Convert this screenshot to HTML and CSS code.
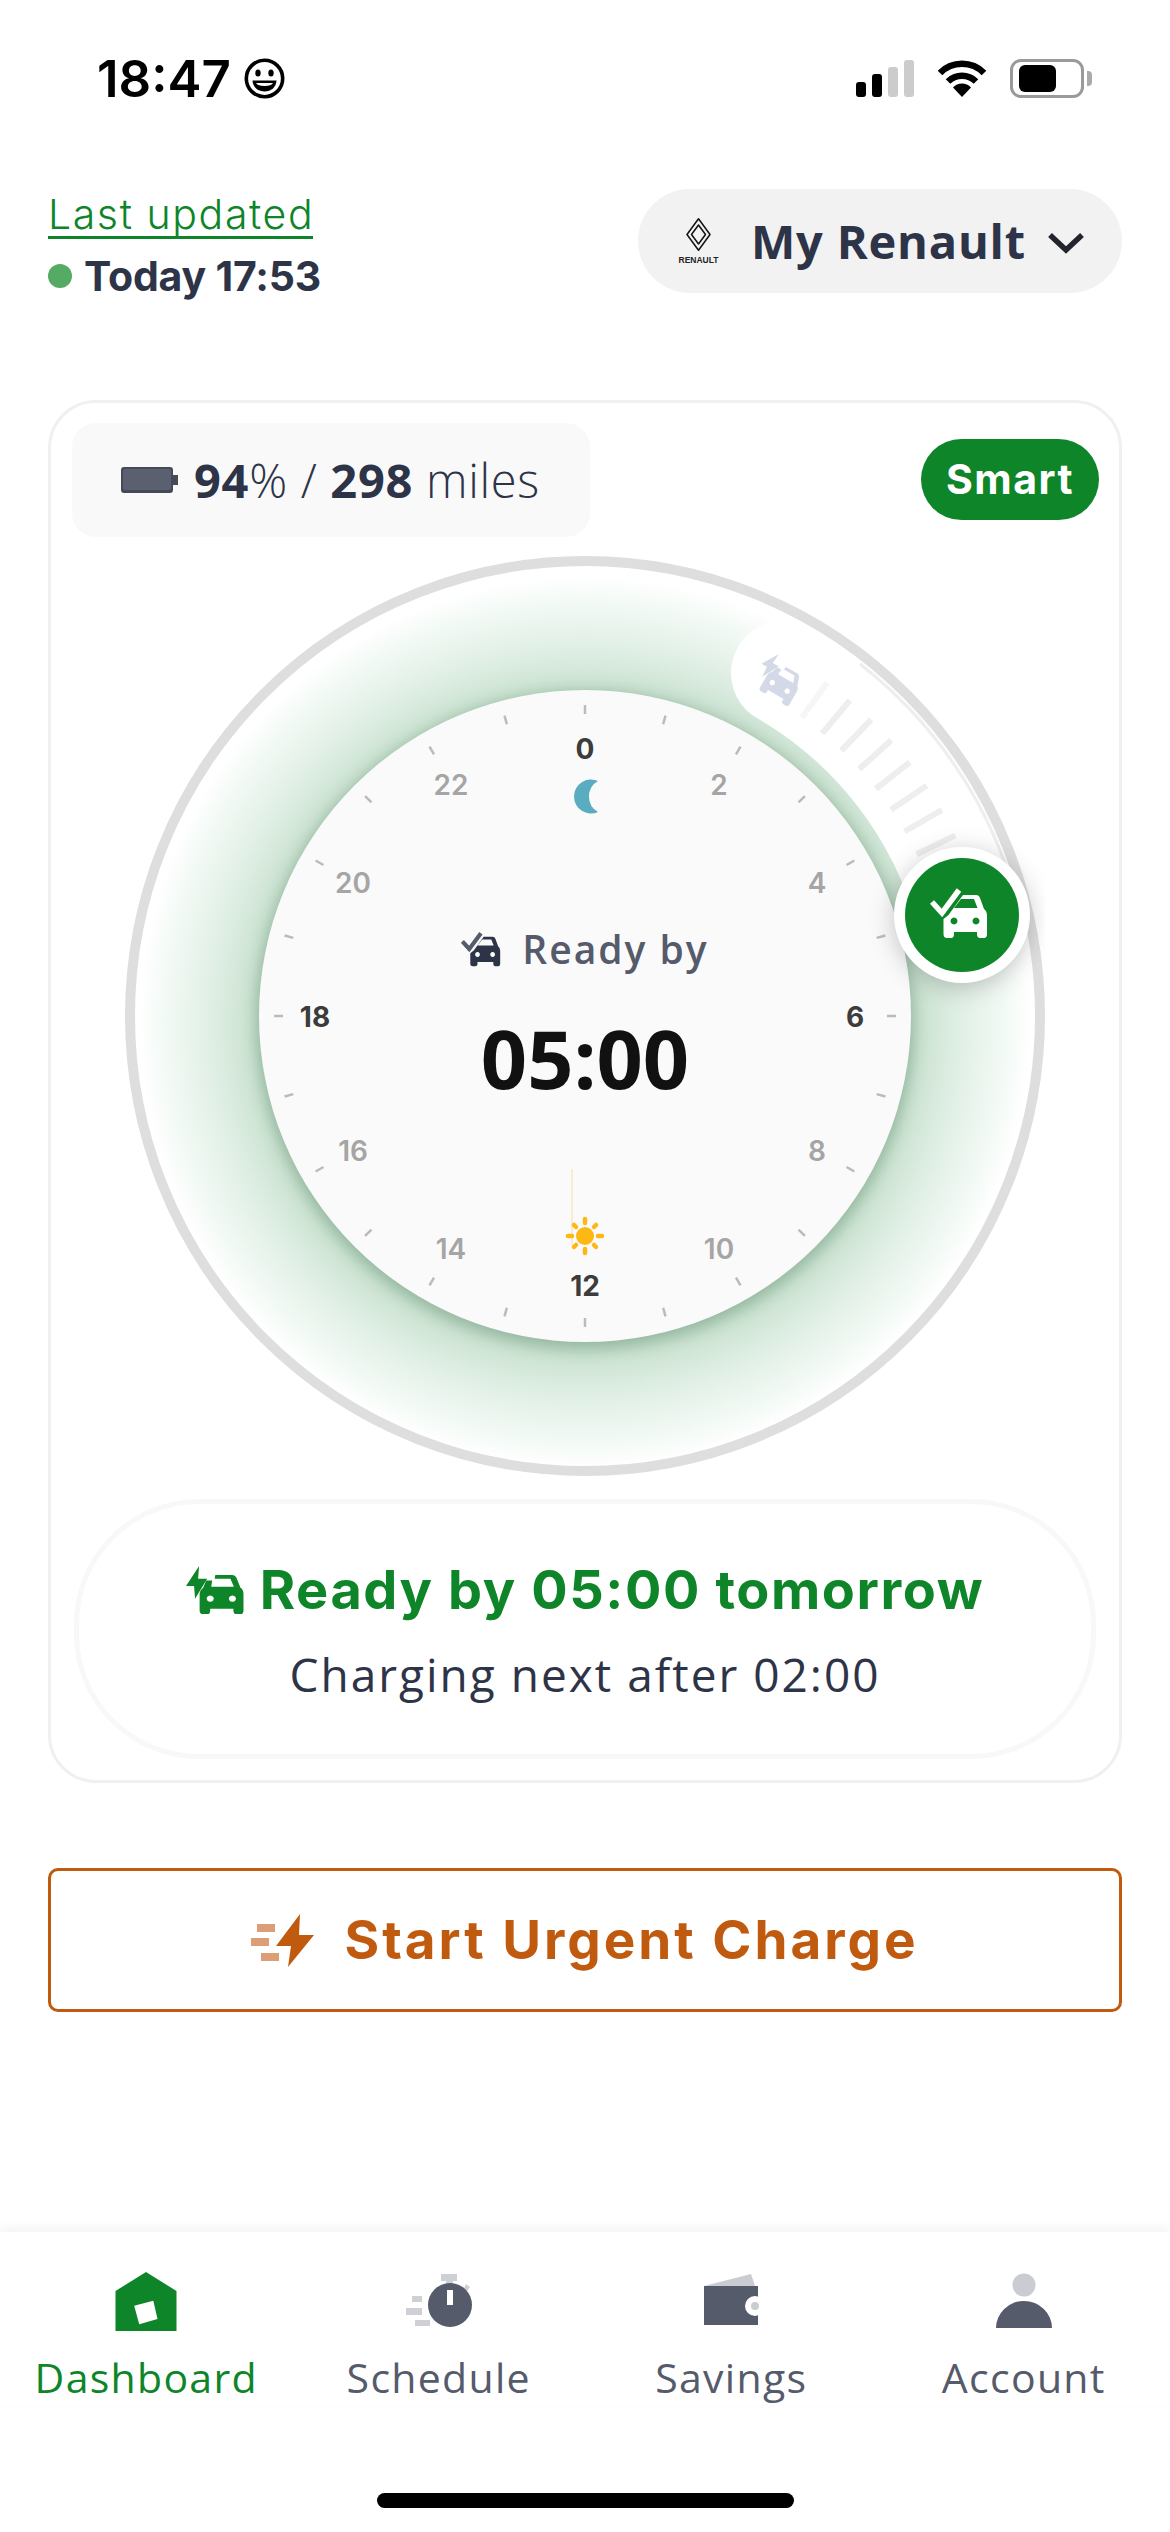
FILE: index.html
```html
<!DOCTYPE html>
<html lang="en">
<head>
    <meta charset="UTF-8">
    <title>Dashboard</title>

    <link rel="stylesheet" href="styles.css">
</head>

<body>
    <svg class="icon-defs" width="0" height="0">
        <symbol id="car-body" viewBox="0 0 64 52">
            <path fill-rule="evenodd" d="M33 8H46Q49 8 50 11L54 22Q57 24 57 29V47Q57 51 54 51H50Q47 51 47 47V45H24V47Q24 51 21 51H17Q13.5 51 13.5 47V32L18.5 28ZM31 12H44L47.5 21H24ZM24 30.5a3.5 3.5 0 1 0 .01 0ZM46 30.5a3.5 3.5 0 1 0 .01 0Z"/>
        </symbol>
        <symbol id="car-bolt" viewBox="0 0 64 54">
            <path fill-rule="evenodd" d="M33 10H46Q49 10 50 13L54 24Q57 26 57 31V49Q57 53 54 53H50Q47 53 47 49V47H24V49Q24 53 21 53H17Q13.5 53 13.5 49V31Q13.5 27 17 24L20 16H26L25 23H47.5L44 14H28.5L29 10ZM24 32.5a3.5 3.5 0 1 0 .01 0ZM46 32.5a3.5 3.5 0 1 0 .01 0Z"/>
            <polygon points="13,0 0,22 8,22 9,36 21,14 12,14"/>
        </symbol>
    </svg>

    <div class="status-bar">
        <div class="status-time">
            <span>18:47</span>
            <svg class="smiley" viewBox="0 0 41 41">
                <circle cx="20.5" cy="20.5" r="18.2" fill="#fff" stroke="#000" stroke-width="3.6"/>
                <ellipse cx="14" cy="15" rx="2.7" ry="3.6"/>
                <ellipse cx="27" cy="15" rx="2.7" ry="3.6"/>
                <path d="M8.5 22.5H32.5C32 29.5 27 33.5 20.5 33.5S9 29.5 8.500 22.500Z"/>
                <path d="M12 25H29C28 27 25 28 20.500 28S13 27 12 25Z" fill="#fff"/>
            </svg>
        </div>
        <div class="status-icons">
            <div class="signal">
                <span class="bar bar-1"></span>
                <span class="bar bar-2"></span>
                <span class="bar bar-3 off"></span>
                <span class="bar bar-4 off"></span>
            </div>
            <svg class="wifi" viewBox="0 0 50 37">
                <path d="M3 13A31 31 0 0 1 47 13M11 21.500A20 20 0 0 1 39 21.500" fill="none" stroke="#000" stroke-width="6.500"/>
                <path d="M25 37L16 27.500A12 12 0 0 1 34 27.500Z"/>
            </svg>
            <div class="phone-battery"><span class="phone-battery-fill"></span></div>
        </div>
    </div>

    <div class="header">
        <div class="updated">
            <div class="updated-label">Last updated</div>
            <div class="updated-time"><span class="dot"></span>Today 17:53</div>
        </div>
        <div class="vehicle-select">
            <div class="renault-logo">
                <svg viewBox="0 0 25 33" width="25" height="33">
                    <path d="M12.500 .8L24 16.500 12.500 32.200 1 16.500ZM12.500 7L19.500 16.500 12.500 26 5.500 16.500Z" fill="none" stroke="#111" stroke-width="1.500" stroke-linejoin="round"/>
                </svg>
                <span>RENAULT</span>
            </div>
            <span class="vehicle-name">My Renault</span>
            <svg class="chevron" viewBox="0 0 38 22"><path d="M3 3L19 18 35 3" fill="none" stroke="#22252e" stroke-width="5.500"/></svg>
        </div>
    </div>

    <div class="card">
        <div class="card-top">
            <div class="range">
                <svg class="range-icon" viewBox="0 0 57 26">
                    <path d="M3 0H49Q52 0 52 3V8H57V18H52V23Q52 26 49 26H3Q0 26 0 23V3Q0 0 3 0Z" fill="#444a5a"/>
                    <rect x="2" y="2" width="48" height="21" rx="2" fill="#5a6070"/>
                </svg>
                <span><b>94</b>% / <b>298</b> miles</span>
            </div>
            <div class="mode">Smart</div>
        </div>

        <div class="dial">
            <svg class="dial-svg" viewBox="0 0 920 920" width="920" height="920">
                <defs>
                    <radialGradient id="glow" gradientUnits="userSpaceOnUse" cx="460" cy="466" r="455">
                        <stop offset="0.72" stop-color="#c4dfcb"/>
                        <stop offset="0.74" stop-color="#cce3d2"/>
                        <stop offset="0.824" stop-color="#e0efe5"/>
                        <stop offset="0.934" stop-color="#f5fbf7"/>
                        <stop offset="0.98" stop-color="#ffffff"/>
                    </radialGradient>
                </defs>
                <circle cx="460" cy="460" r="455" fill="url(#glow)" stroke="#dedede" stroke-width="10"/>

                <path class="band" d="M658 117A396 396 0 0 1 842.500 357.500"/>
                <path class="band-edge" d="M735 108A447 447 0 0 1 885 322"/>
                <g class="band-ticks">
                    <line x1="460" y1="91" x2="460" y2="48" transform="rotate(36 460 460)" opacity="0.5"/>
                    <line x1="460" y1="91" x2="460" y2="48" transform="rotate(40 460 460)"/>
                    <line x1="460" y1="91" x2="460" y2="48" transform="rotate(44 460 460)"/>
                    <line x1="460" y1="91" x2="460" y2="48" transform="rotate(48 460 460)"/>
                    <line x1="460" y1="91" x2="460" y2="48" transform="rotate(52 460 460)"/>
                    <line x1="460" y1="91" x2="460" y2="48" transform="rotate(56 460 460)"/>
                    <line x1="460" y1="91" x2="460" y2="48" transform="rotate(60 460 460)"/>
                    <line x1="460" y1="91" x2="460" y2="48" transform="rotate(64 460 460)"/>
                </g>
                <use href="#car-bolt" class="ghost-car" x="-25" y="-22" width="50" height="43" transform="translate(656 124) rotate(30)"/>

                <circle class="face" cx="460" cy="460" r="326"/>

                <g class="hour-ticks">
                    <line x1="460" y1="149" x2="460" y2="158"/>
                    <line x1="460" y1="149" x2="460" y2="158" transform="rotate(15 460 460)"/>
                    <line x1="460" y1="149" x2="460" y2="158" transform="rotate(30 460 460)"/>
                    <line x1="460" y1="149" x2="460" y2="158" transform="rotate(45 460 460)"/>
                    <line x1="460" y1="149" x2="460" y2="158" transform="rotate(60 460 460)"/>
                    <line x1="460" y1="149" x2="460" y2="158" transform="rotate(75 460 460)"/>
                    <line x1="460" y1="149" x2="460" y2="158" transform="rotate(90 460 460)"/>
                    <line x1="460" y1="149" x2="460" y2="158" transform="rotate(105 460 460)"/>
                    <line x1="460" y1="149" x2="460" y2="158" transform="rotate(120 460 460)"/>
                    <line x1="460" y1="149" x2="460" y2="158" transform="rotate(135 460 460)"/>
                    <line x1="460" y1="149" x2="460" y2="158" transform="rotate(150 460 460)"/>
                    <line x1="460" y1="149" x2="460" y2="158" transform="rotate(165 460 460)"/>
                    <line x1="460" y1="149" x2="460" y2="158" transform="rotate(180 460 460)"/>
                    <line x1="460" y1="149" x2="460" y2="158" transform="rotate(195 460 460)"/>
                    <line x1="460" y1="149" x2="460" y2="158" transform="rotate(210 460 460)"/>
                    <line x1="460" y1="149" x2="460" y2="158" transform="rotate(225 460 460)"/>
                    <line x1="460" y1="149" x2="460" y2="158" transform="rotate(240 460 460)"/>
                    <line x1="460" y1="149" x2="460" y2="158" transform="rotate(255 460 460)"/>
                    <line x1="460" y1="149" x2="460" y2="158" transform="rotate(270 460 460)"/>
                    <line x1="460" y1="149" x2="460" y2="158" transform="rotate(285 460 460)"/>
                    <line x1="460" y1="149" x2="460" y2="158" transform="rotate(300 460 460)"/>
                    <line x1="460" y1="149" x2="460" y2="158" transform="rotate(315 460 460)"/>
                    <line x1="460" y1="149" x2="460" y2="158" transform="rotate(330 460 460)"/>
                    <line x1="460" y1="149" x2="460" y2="158" transform="rotate(345 460 460)"/>
                </g>

                <g class="hours">
                    <text x="460" y="192" dy=".38em" class="major">0</text>
                    <text x="594" y="228" dy=".38em">2</text>
                    <text x="692" y="326" dy=".38em">4</text>
                    <text x="730" y="460" dy=".38em" class="major">6</text>
                    <text x="692" y="594" dy=".38em">8</text>
                    <text x="594" y="692" dy=".38em">10</text>
                    <text x="460" y="729" dy=".38em" class="major">12</text>
                    <text x="326" y="692" dy=".38em">14</text>
                    <text x="228" y="594" dy=".38em">16</text>
                    <text x="190" y="460" dy=".38em" class="major">18</text>
                    <text x="228" y="326" dy=".38em">20</text>
                    <text x="326" y="228" dy=".38em">22</text>
                </g>

                <path d="M473 225A17 17 0 1 0 473 256A17.800 17.800 0 0 1 473 225Z" fill="#5aacc0"/>

                <line x1="447" y1="613" x2="447" y2="689" stroke="#f8dfa6" stroke-width="1"/>
                <g class="sun">
                    <circle cx="460" cy="680" r="9"/>
                    <line x1="460" y1="663" x2="460" y2="667"/>
                    <line x1="460" y1="693" x2="460" y2="697"/>
                    <line x1="443" y1="680" x2="447" y2="680"/>
                    <line x1="473" y1="680" x2="477" y2="680"/>
                    <line x1="449" y1="669" x2="451" y2="671"/>
                    <line x1="471" y1="669" x2="469" y2="671"/>
                    <line x1="449" y1="691" x2="451" y2="689"/>
                    <line x1="471" y1="691" x2="469" y2="689"/>
                </g>

                <g class="knob">
                    <circle cx="837" cy="359" r="68" fill="#fff"/>
                    <circle cx="837" cy="359" r="57" fill="#0f8529"/>
                </g>
                <g class="knob-icon">
                    <use href="#car-body" x="805" y="331" width="64" height="52"/>
                    <polyline points="807,346 817,357 834,334" fill="none" stroke="#fff" stroke-width="5.500"/>
                </g>
            </svg>

            <div class="dial-center">
                <div class="ready-row">
                    <svg class="ready-icon" viewBox="0 0 64 52">
                        <use href="#car-body" width="64" height="52"/>
                        <polyline points="2,15 12,26 29,3" fill="none" stroke="#555b6b" stroke-width="6"/>
                    </svg>
                    <span>Ready by</span>
                </div>
                <div class="ready-time">05:00</div>
            </div>
        </div>

        <div class="summary">
            <div class="summary-title">
                <svg viewBox="0 0 57.500 54" width="58" height="49" preserveAspectRatio="none"><use href="#car-bolt" width="64" height="54"/></svg>
                <span>Ready by 05:00 tomorrow</span>
            </div>
            <div class="summary-sub">Charging next after 02:00</div>
        </div>
    </div>

    <div class="urgent-button">
        <svg viewBox="0 0 63 53" width="63" height="53">
            <g fill="#dc9e76">
                <rect x="6" y="10" width="18" height="8"/>
                <rect x="0" y="24" width="18" height="8"/>
                <rect x="10" y="39" width="18" height="8"/>
            </g>
            <polygon points="49,0 25,32 40,32 37,53 63,21 48,21" fill="#bf5a0f"/>
        </svg>
        <span>Start Urgent Charge</span>
    </div>

    <div class="spacer"></div>

    <div class="tabbar">
        <div class="tab tab-active">
            <svg viewBox="0 0 70 68" width="70" height="68">
                <path fill="#0f8529" fill-rule="evenodd" d="M35 4L4.500 23V63H65.500V23ZM23.200 37.700L42.300 32.700 46.500 51 28.200 56.300Z"/>
            </svg>
            <span>Dashboard</span>
        </div>
        <div class="tab">
            <svg viewBox="0 0 70 68" width="70" height="68">
                <g fill="#cfd0d5">
                    <rect x="37" y="6" width="16" height="7"/>
                    <rect x="42" y="13" width="7" height="6"/>
                    <rect x="8" y="28" width="10" height="6"/>
                    <rect x="2" y="40" width="16" height="7"/>
                    <rect x="11" y="52" width="15" height="6"/>
                    <path d="M59 23L62 16 66 19 62 25Z"/>
                </g>
                <circle cx="46" cy="37" r="22" fill="#555b6b"/>
                <rect x="43" y="22" width="6" height="15" fill="#fff"/>
            </svg>
            <span>Schedule</span>
        </div>
        <div class="tab">
            <svg viewBox="0 0 70 68" width="70" height="68">
                <polygon points="8,18 55,6 59,18" fill="#cbccd1"/>
                <rect x="8" y="18" width="54" height="39" fill="#555b6b"/>
                <circle cx="59" cy="38" r="10" fill="#fff"/>
                <circle cx="59" cy="38" r="4" fill="#cbccd1"/>
            </svg>
            <span>Savings</span>
        </div>
        <div class="tab">
            <svg viewBox="0 0 70 68" width="70" height="68">
                <circle cx="35" cy="17" r="11.500" fill="#cbccd1"/>
                <path d="M7 60A28 27 0 0 1 63 60Z" fill="#555b6b"/>
            </svg>
            <span>Account</span>
        </div>
    </div>
    <div class="home-area"><div class="home-bar"></div></div>
</body>
</html>
```

FILE: styles.css
```css
html, body {
    margin: 0;
    padding: 0;
}

body {
    width: 1170px;
    height: 2532px;
    display: flex;
    flex-direction: column;
    background: #fff;
    color: #2e3447;
    font-family: "Open Sans", "Noto Sans", sans-serif;
    overflow: hidden;
}

.icon-defs {
    position: absolute;
}

/* status bar */
.status-bar {
    display: flex;
    justify-content: space-between;
    align-items: center;
    height: 41px;
    padding: 58px 86px 0 97px;
}

.status-time {
    display: flex;
    align-items: center;
    gap: 13px;
    font: 600 51px/41px Inter, sans-serif;
    color: #000;
}

.smiley {
    width: 41px;
    height: 41px;
}

.status-icons {
    display: flex;
    align-items: center;
}

.signal {
    display: flex;
    align-items: flex-end;
    gap: 6px;
    height: 37px;
}

.bar {
    width: 10px;
    border-radius: 3px;
    background: #000;
}

.bar-1 { height: 15px; }
.bar-2 { height: 23px; }
.bar-3 { height: 30px; }
.bar-4 { height: 37px; }

.bar.off {
    background: #ccc;
}

.wifi {
    width: 50px;
    height: 37px;
    margin-left: 23px;
}

.phone-battery {
    position: relative;
    box-sizing: border-box;
    width: 74px;
    height: 39px;
    margin-left: 23px;
    padding: 3px 6px;
    border: 3px solid #9a9a9a;
    border-radius: 11px;
}

.phone-battery::after {
    content: "";
    position: absolute;
    right: -11px;
    top: 9px;
    width: 5px;
    height: 15px;
    border-radius: 0 4px 4px 0;
    background: #aaa;
}

.phone-battery-fill {
    display: block;
    width: 37px;
    height: 27px;
    border-radius: 6px;
    background: #000;
}

/* header */
.header {
    display: flex;
    justify-content: space-between;
    align-items: flex-start;
    padding: 90px 48px 0;
    height: 211px;
}

.updated-label {
    width: 265px;
    margin-top: 3px;
    border-bottom: 3px solid #0f8529;
    color: #0f8529;
    font: 300 41px/44px Inter, sans-serif;
    letter-spacing: 1.600px;
    white-space: nowrap;
}

.updated-time {
    display: flex;
    align-items: center;
    margin-top: 14px;
    font: 700 41px/46px Inter, sans-serif;
    letter-spacing: -0.2px;
}

.dot {
    width: 24px;
    height: 24px;
    margin-right: 12px;
    border-radius: 50%;
    background: #56ab64;
}

.vehicle-select {
    display: flex;
    align-items: center;
    box-sizing: border-box;
    width: 484px;
    height: 104px;
    padding-left: 37px;
    border-radius: 52px;
    background: #f2f2f2;
}

.renault-logo {
    display: flex;
    flex-direction: column;
    align-items: center;
    width: 47px;
    gap: 5px;
}

.renault-logo span {
    color: #222;
    font: 700 8.500px/9px "Liberation Sans", sans-serif;
}

.vehicle-name {
    margin-left: 29px;
    font-size: 47px;
    font-weight: 700;
    letter-spacing: 0.8px;
    line-height: 60px;
}

.chevron {
    width: 38px;
    height: 22px;
    margin-top: 3px;
    margin-left: 21px;
}

/* main card */
.card {
    box-sizing: border-box;
    display: flex;
    flex-direction: column;
    width: 1074px;
    height: 1383px;
    margin: 0 48px;
    padding: 20px 20px 0;
    border: 3px solid #f0f0f0;
    border-radius: 48px;
}

.card-top {
    display: flex;
    justify-content: space-between;
    align-items: flex-start;
    height: 114px;
    margin-left: 1px;
}

.range {
    display: flex;
    align-items: center;
    box-sizing: border-box;
    width: 518px;
    height: 114px;
    padding-left: 49px;
    border-radius: 24px;
    background: #f9f9fa;
    font-size: 47px;
    font-weight: 300;
    letter-spacing: 0.700px;
    gap: 16px;
}

.range b {
    font-weight: 700;
}

.range-icon {
    width: 57px;
    height: 26px;
}

.mode {
    width: 178px;
    height: 81px;
    margin-top: 16px;
    border-radius: 41px;
    background: #0f8529;
    color: #fff;
    text-align: center;
    font: 700 41px/80px Inter, sans-serif;
    letter-spacing: 1.500px;
}

.dial {
    position: relative;
    align-self: center;
    width: 920px;
    height: 920px;
    margin-top: 19px;
}

.dial-svg {
    display: block;
}

.band {
    fill: none;
    stroke: #fff;
    stroke-width: 104;
    stroke-linecap: round;
}

.band-edge {
    fill: none;
    stroke: #eeeeee;
    stroke-width: 3;
}

.band-ticks line {
    stroke: #eeeeee;
    stroke-width: 6;
}

.ghost-car {
    fill: #d3d9e6;
}

.face {
    fill: #fafafa;
    filter: drop-shadow(0 4px 9px rgba(40, 90, 60, 0.38));
}

.hour-ticks line {
    stroke: #bbb;
    stroke-width: 2.500;
}

.hours text {
    fill: #a5a5a5;
    font: 600 28px Inter, sans-serif;
    text-anchor: middle;
}

.hours text.major {
    fill: #3c3c3c;
    font-weight: 700;
}

.sun {
    fill: #fdb813;
    stroke: #fdb813;
}

.sun circle {
    stroke: none;
}

.sun line {
    stroke-width: 4.500;
    stroke-linecap: round;
}

.knob {
    filter: drop-shadow(0 4px 12px rgba(0, 0, 0, 0.22));
}

.knob-icon {
    fill: #fff;
}

.dial-center {
    position: absolute;
    inset: 0;
    display: flex;
    flex-direction: column;
    align-items: center;
    justify-content: center;
    box-sizing: border-box;
}

.ready-row {
    display: flex;
    align-items: center;
    gap: 17px;
    color: #555b6b;
    font-size: 39px;
    font-weight: 600;
    letter-spacing: 2px;
    line-height: 50px;
}

.ready-icon {
    width: 44px;
    height: 36px;
    fill: #2e3447;
}

.ready-time {
    margin-top: 34px;
    color: #111;
    font-size: 81px;
    font-weight: 700;
    line-height: 100px;
}

.summary {
    box-sizing: border-box;
    height: 260px;
    margin: 23px 3px 0;
    padding-top: 56px;
    border: 5px solid #f8f8f8;
    border-radius: 125px;
    text-align: center;
}

.summary-title {
    display: flex;
    justify-content: center;
    align-items: center;
    gap: 16px;
    color: #0f8529;
    fill: #0f8529;
    font: 700 54px/60px Inter, sans-serif;
    letter-spacing: 1.600px;
}

.summary-sub {
    margin-top: 24px;
    font-size: 46px;
    letter-spacing: 2px;
    line-height: 60px;
}

/* urgent charge */
.urgent-button {
    display: flex;
    justify-content: center;
    align-items: center;
    gap: 30px;
    box-sizing: border-box;
    width: 1074px;
    height: 144px;
    margin: 85px 48px 0;
    border: 3px solid #bf5a0f;
    border-radius: 10px;
    color: #bf5a0f;
    font: 700 53px/60px Inter, sans-serif;
    letter-spacing: 3px;
}

.spacer {
    flex: 1;
}

/* tab bar */
.tabbar {
    display: grid;
    grid-template-columns: repeat(4, 1fr);
    padding-top: 36px;
    box-shadow: 0 -4px 10px rgba(0, 0, 0, 0.05);
}

.tab {
    display: flex;
    flex-direction: column;
    align-items: center;
    color: #555b6b;
    font-size: 41px;
    font-weight: 400;
    line-height: 56px;
    letter-spacing: 1.300px;
}

.tab svg {
    margin-bottom: 13px;
}

.tab-active {
    color: #0f8529;
}

.home-area {
    display: flex;
    justify-content: center;
    height: 127px;
}

.home-bar {
    width: 417px;
    height: 15px;
    margin-top: 88px;
    border-radius: 8px;
    background: #000;
}
```
